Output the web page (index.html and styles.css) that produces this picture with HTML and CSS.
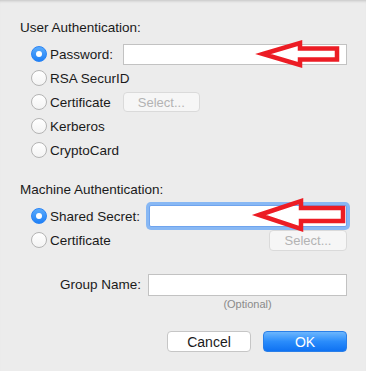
FILE: index.html
```html
<html lang="en">
<head>
  <meta charset="UTF-8" />
  <meta name="viewport" content="width=device-width, initial-scale=1.0" />
  <title>Authentication</title>
  <link rel="stylesheet" href="styles.css">
</head>
<body>
  <div class="dialog">
    <div class="section-title">User Authentication:</div>
    <div class="options">
      <label class="option">
        <span class="radio checked"></span>
        <span class="option-label">Password:</span>
        <input class="text-field pw-field" type="text" />
      </label>
      <label class="option">
        <span class="radio"></span>
        <span class="option-label">RSA SecurID</span>
      </label>
      <label class="option">
        <span class="radio"></span>
        <span class="option-label">Certificate</span>
        <button class="select-btn cert-select" disabled>Select...</button>
      </label>
      <label class="option">
        <span class="radio"></span>
        <span class="option-label">Kerberos</span>
      </label>
      <label class="option">
        <span class="radio"></span>
        <span class="option-label">CryptoCard</span>
      </label>
    </div>

    <div class="section-title machine-title">Machine Authentication:</div>
    <div class="options">
      <label class="option">
        <span class="radio checked"></span>
        <span class="option-label">Shared Secret:</span>
        <input class="text-field secret-field" type="text" />
      </label>
      <label class="option">
        <span class="radio"></span>
        <span class="option-label">Certificate</span>
        <button class="select-btn machine-select" disabled>Select...</button>
      </label>
    </div>

    <div class="group-row">
      <span class="group-label">Group Name:</span>
      <div class="group-field">
        <input class="text-field group-input" type="text" />
        <div class="hint">(Optional)</div>
      </div>
    </div>

    <div class="actions">
      <button class="btn">Cancel</button>
      <button class="btn primary">OK</button>
    </div>

    <!-- red annotation arrows drawn over the fields -->
    <svg class="annotations" width="366" height="371" viewBox="0 0 366 371">
      <polygon points="263,54 300,43 300,48.5 337,48.5 337,59.5 300,59.5 300,65" />
      <polygon points="259,215 301,201 301,208 343,208 343,221 301,221 301,229" />
    </svg>
  </div>
</body>
</html>
```

FILE: styles.css
```css
:root {
  --bg: #ececec;
  --text: #1a1a1a;
  --field-border: #c2c2c2;
  --blue: #2b8af8;
  --arrow: #ec1c24;
}

* {
  box-sizing: border-box;
}

body {
  margin: 0;
  background: var(--bg);
  font-family: "Liberation Sans", Arial, sans-serif;
  font-size: 13.5px;
  color: var(--text);
}

.dialog {
  position: relative;
  width: 366px;
  height: 371px;
  padding: 20px 19px 0 20px;
  box-shadow: inset 0 3px 3px -2px rgba(0, 0, 0, 0.18);
}

.section-title {
  line-height: 16px;
  margin-bottom: 6px;
}

.machine-title {
  margin-top: 20px;
  margin-bottom: 6px;
}

.options {
  margin-left: 11px;
}

.option {
  display: flex;
  align-items: center;
  height: 24px;
}

.radio {
  width: 16px;
  height: 16px;
  flex: none;
  border-radius: 50%;
  border: 1px solid #b4b4b4;
  background: linear-gradient(#ffffff, #f3f3f3);
  margin-right: 3px;
  position: relative;
}

.radio.checked {
  border-color: #2a84f5;
  background: linear-gradient(#5aabfc, #1f80f6);
}

.radio.checked::after {
  content: "";
  position: absolute;
  left: 4px;
  top: 4px;
  width: 6px;
  height: 6px;
  border-radius: 50%;
  background: #fff;
}

.text-field {
  flex: 1;
  min-width: 0;
  background: #fff;
  border: 1px solid var(--field-border);
  border-radius: 0;
  font: inherit;
  padding: 0 3px;
  outline: none;
}

.pw-field {
  margin-left: 10px;
  height: 21px;
}

.secret-field {
  margin-left: 9px;
  height: 22px;
  border-color: #6fa4ee;
  border-radius: 2px;
  box-shadow: 0 0 0 3px #88b8f4;
}

.select-btn {
  width: 77px;
  height: 20px;
  border: 1px solid #dadada;
  border-radius: 4px;
  background: #f6f6f6;
  color: #b3b3b3;
  font-family: inherit;
  font-size: 13px;
  padding: 0;
}

.cert-select {
  margin-left: 12px;
}

.machine-select {
  margin-left: auto;
  width: 78px;
  height: 21px;
}

.group-row {
  display: grid;
  grid-template-columns: auto 1fr;
  column-gap: 7px;
  margin-top: 22px;
  padding-left: 40px;
}

.group-label {
  line-height: 22px;
}

.group-field {
  display: flex;
  flex-direction: column;
}

.group-input {
  height: 22px;
  flex: none;
}

.hint {
  text-align: center;
  font-size: 11px;
  line-height: 14px;
  margin-top: 1px;
  color: #8a8a8a;
}

.actions {
  display: flex;
  justify-content: flex-end;
  gap: 12px;
  margin-top: 20px;
}

.btn {
  width: 84px;
  height: 21px;
  border: 1px solid #c6c6c6;
  border-radius: 4px;
  background: #fff;
  color: var(--text);
  font-family: inherit;
  font-size: 14px;
  padding: 0;
}

.btn.primary {
  border-color: #2a7fe8;
  background: linear-gradient(#6cb6fd, #2a8cfb 50%, #0f72f2);
  color: #fff;
}

.annotations {
  position: absolute;
  left: 0;
  top: 0;
  pointer-events: none;
}

.annotations polygon {
  fill: none;
  stroke: var(--arrow);
  stroke-width: 4.5;
  stroke-linejoin: miter;
}
```
